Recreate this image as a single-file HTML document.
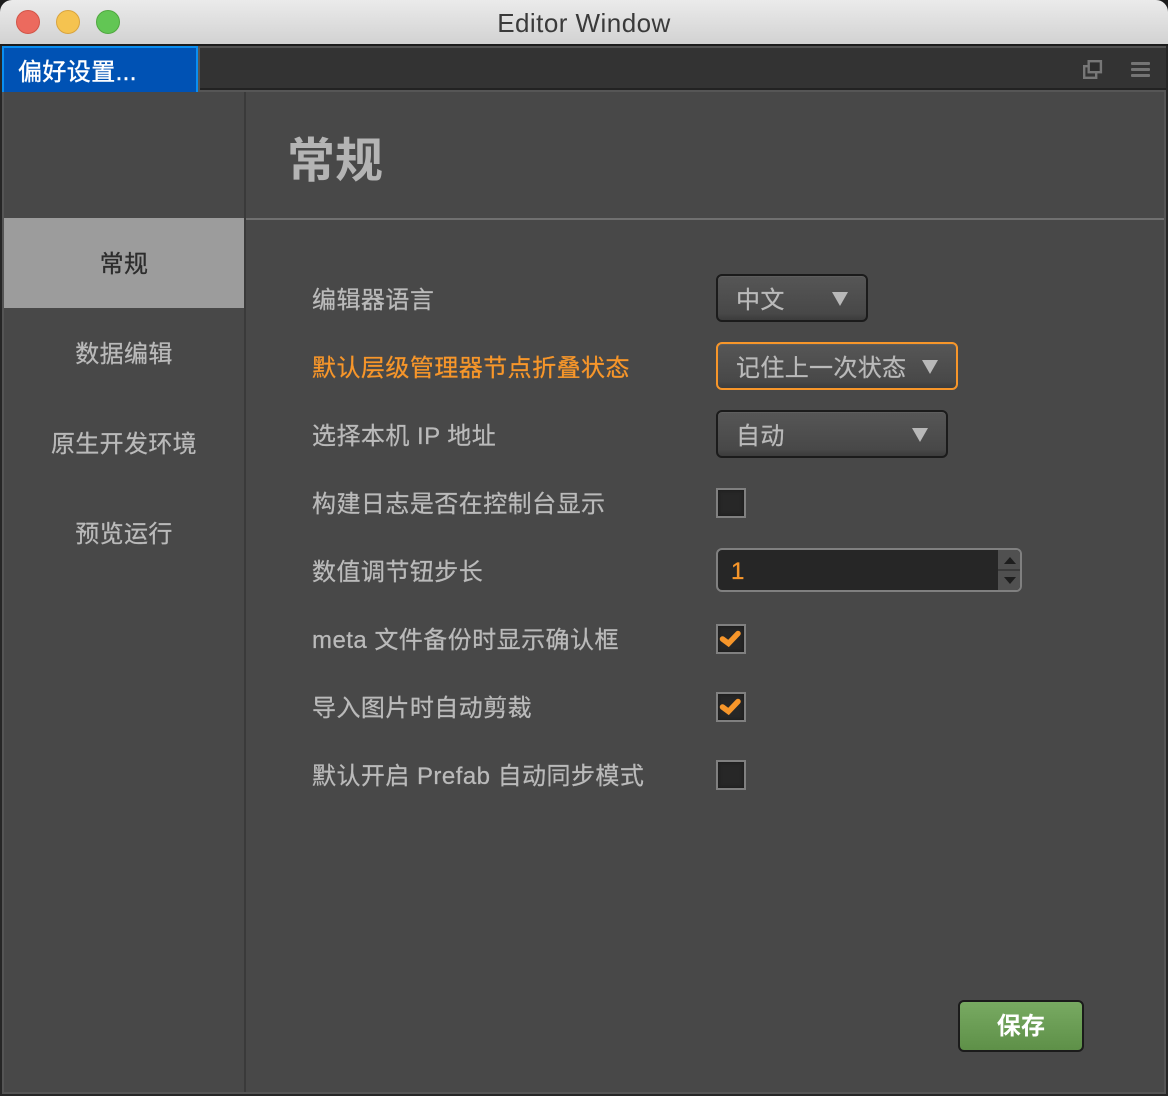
<!DOCTYPE html>
<html><head><meta charset="utf-8"><style>
html,body{margin:0;padding:0;background:#262626;}
#w{position:relative;width:1168px;height:1096px;overflow:hidden;background:#262626;font-family:"Liberation Sans","Noto Sans CJK SC",sans-serif;}
#w div{position:absolute;box-sizing:border-box;white-space:nowrap;}
.l{left:312px;font-size:24px;line-height:34px;height:34px;color:#bababa;letter-spacing:.46px;-webkit-text-stroke:.25px currentColor;}
.n{left:4px;width:240px;text-align:center;font-size:24px;line-height:34px;height:34px;color:#bababa;letter-spacing:.35px;-webkit-text-stroke:.25px currentColor;}
.s{left:716px;height:48px;border:2px solid #1b1b1b;border-radius:6px;background:linear-gradient(#565656,#484848 85%,#3c3c3c);box-shadow:inset 0 1px 0 #5e5e5e;color:#bababa;font-size:24px;line-height:50px;padding-left:18px;letter-spacing:.35px;-webkit-text-stroke:.25px currentColor;}
.t{width:0;height:0;border-left:8px solid transparent;border-right:8px solid transparent;border-top:14px solid #b8b8b8;top:16px;}
.c{left:716px;width:30px;height:30px;border:2px solid #808080;background:#272727;box-shadow:inset 0 0 4px #1a1a1a;}
</style></head><body><div id="w">
<div style="left:0;top:0;width:1168px;height:46px;background:#1c1c1c;"></div>
<div style="left:0;top:0;width:1168px;height:44px;border-radius:12px 12px 0 0;background:linear-gradient(#ebebeb,#d2d2d2);"></div>
<div style="left:16px;top:10px;width:24px;height:24px;border-radius:50%;background:#ec6a5e;border:1px solid #d25548;"></div>
<div style="left:56px;top:10px;width:24px;height:24px;border-radius:50%;background:#f5c350;border:1px solid #d9a43e;"></div>
<div style="left:96px;top:10px;width:24px;height:24px;border-radius:50%;background:#62c654;border:1px solid #50a840;"></div>
<div style="left:0;top:4px;width:1168px;text-align:center;font-size:26px;line-height:38px;color:#3a3a3a;letter-spacing:.46px;">Editor Window</div>

<div style="left:2px;top:46px;width:1164px;height:1048px;background:#555;"></div>
<div style="left:4px;top:92px;width:1160px;height:1000px;background:#484848;"></div>
<div style="left:200px;top:46px;width:966px;height:44px;background:#333;border-top:2px solid #525252;border-bottom:2px solid #222;"></div>
<div style="left:2px;top:90px;width:1164px;height:2px;background:#565656;"></div>
<div style="left:2px;top:46px;width:196px;height:46px;background:#0052b4;border:2px solid #0a8ef0;border-bottom:none;color:#fff;font-size:24px;line-height:50px;padding-left:14px;letter-spacing:.4px;-webkit-text-stroke:.4px #fff;">偏好设置...</div>

<svg style="position:absolute;left:1083px;top:60px" width="20" height="20" fill="none" stroke="#777" stroke-width="2.4"><rect x="1.2" y="6.2" width="12" height="11.6"/><rect x="5.7" y="1.2" width="12.2" height="11" fill="#2e2e2e"/></svg>
<div style="left:1131px;top:62px;width:19px;height:3px;background:#747474;border-radius:1px;"></div>
<div style="left:1131px;top:68px;width:19px;height:3px;background:#747474;border-radius:1px;"></div>
<div style="left:1131px;top:74px;width:19px;height:3px;background:#747474;border-radius:1px;"></div>

<div style="left:244px;top:92px;width:2px;height:1000px;background:#3a3a3a;"></div>
<div style="left:246px;top:218px;width:918px;height:2px;background:#707070;"></div>
<div style="left:4px;top:218px;width:240px;height:90px;background:#9c9c9c;"></div>

<div style="left:287px;top:131px;font-size:48px;line-height:62px;font-weight:bold;color:#b4b4b4;">常规</div>

<div class="n" style="top:248px;color:#2c2c2c;">常规</div>
<div class="n" style="top:338px;">数据编辑</div>
<div class="n" style="top:428px;">原生开发环境</div>
<div class="n" style="top:518px;">预览运行</div>

<div class="l" style="top:284px;">编辑器语言</div>
<div class="l" style="top:352px;color:#f7962a;">默认层级管理器节点折叠状态</div>
<div class="l" style="top:420px;">选择本机 IP 地址</div>
<div class="l" style="top:488px;">构建日志是否在控制台显示</div>
<div class="l" style="top:556px;">数值调节钮步长</div>
<div class="l" style="top:624px;">meta 文件备份时显示确认框</div>
<div class="l" style="top:692px;">导入图片时自动剪裁</div>
<div class="l" style="top:760px;">默认开启 Prefab 自动同步模式</div>

<div class="s" style="top:274px;width:152px;">中文<div class="t" style="left:114px;"></div></div>
<div class="s" style="top:342px;width:242px;border-color:#f7962a;">记住上一次状态<div class="t" style="left:204px;"></div></div>
<div class="s" style="top:410px;width:232px;">自动<div class="t" style="left:194px;"></div></div>

<div class="c" style="top:488px;"></div>
<div class="c" style="top:624px;"></div>
<div class="c" style="top:692px;"></div>
<div class="c" style="top:760px;"></div>
<svg style="position:absolute;left:716px;top:624px" width="30" height="30" fill="none" stroke="#f7962a" stroke-width="5.5" stroke-linecap="round"><path d="M6.5 15L12.5 19.5L22 9.5"/></svg>
<svg style="position:absolute;left:716px;top:692px" width="30" height="30" fill="none" stroke="#f7962a" stroke-width="5.5" stroke-linecap="round"><path d="M6.5 15L12.5 19.5L22 9.5"/></svg>

<div style="left:716px;top:548px;width:306px;height:44px;border:2px solid #808080;border-radius:6px;background:#262626;overflow:hidden;color:#f7962a;font-size:24px;line-height:44px;padding-left:13px;-webkit-text-stroke:.3px #f7962a;">1
<div style="left:280px;top:0;width:24px;height:40px;background:#505050;"></div>
<div style="left:280px;top:19px;width:24px;height:2px;background:#3a3a3a;"></div>
<div style="left:286px;top:7px;width:0;height:0;border-left:6px solid transparent;border-right:6px solid transparent;border-bottom:7px solid #1e1e1e;"></div>
<div style="left:286px;top:27px;width:0;height:0;border-left:6px solid transparent;border-right:6px solid transparent;border-top:7px solid #1e1e1e;"></div>
</div>

<div style="left:958px;top:1000px;width:126px;height:52px;border:2px solid #1b1b1b;border-radius:6px;background:linear-gradient(#78aa62,#5e9048);color:#fff;font-size:24px;font-weight:bold;line-height:49px;text-align:center;letter-spacing:.3px;">保存</div>
</div></body></html>
